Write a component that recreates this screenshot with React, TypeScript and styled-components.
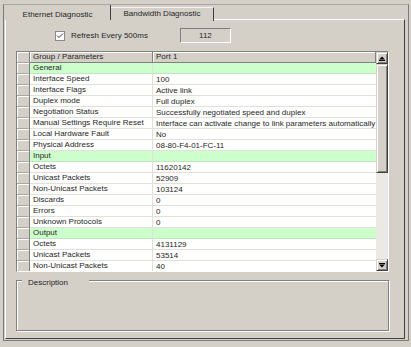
import { createGlobalStyle, styled } from "styled-components";

const Global = createGlobalStyle`
  html, body { margin: 0; padding: 0; background: #d4d0c8; }
  body { font-family: "Liberation Sans", Arial, sans-serif; font-size: 8px; color: #262626; }
  * { box-sizing: border-box; }
`;

type Row = { label: string; value?: string; group?: boolean };

const rows: Row[] = [
  { label: "General", group: true },
  { label: "Interface Speed", value: "100" },
  { label: "Interface Flags", value: "Active link" },
  { label: "Duplex mode", value: "Full duplex" },
  { label: "Negotiation Status", value: "Successfully negotiated speed and duplex" },
  { label: "Manual Settings Require Reset", value: "Interface can activate change to link parameters automatically" },
  { label: "Local Hardware Fault", value: "No" },
  { label: "Physical Address", value: "08-80-F4-01-FC-11" },
  { label: "Input", group: true },
  { label: "Octets", value: "11620142" },
  { label: "Unicast Packets", value: "52909" },
  { label: "Non-Unicast Packets", value: "103124" },
  { label: "Discards", value: "0" },
  { label: "Errors", value: "0" },
  { label: "Unknown Protocols", value: "0" },
  { label: "Output", group: true },
  { label: "Octets", value: "4131129" },
  { label: "Unicast Packets", value: "53514" },
  { label: "Non-Unicast Packets", value: "40" },
];

const Window = styled.div`
  width: 411px;
  height: 347px;
  padding: 4px 3px 6px 3px;
  display: flex;
  background: #d4d0c8;
`;

const Frame = styled.div`
  flex: 1;
  display: flex;
  flex-direction: column;
  border: 1px solid #7a7a7a;
  border-top-color: #a8a6a0;
  padding: 0 3px 1px 1px;
`;

const TabStrip = styled.div`
  height: 14px;
  display: flex;
  align-items: flex-start;
`;

const Tab = styled.div<{ $active?: boolean; $w: number }>`
  position: relative;
  z-index: ${(p) => (p.$active ? 1 : 0)};
  width: ${(p) => p.$w}px;
  height: ${(p) => (p.$active ? 15 : 14)}px;
  margin-top: ${(p) => (p.$active ? 0 : 2)}px;
  background: #d4d0c8;
  display: flex;
  justify-content: center;
  align-items: flex-end;
  line-height: 8px;
  padding-bottom: ${(p) => (p.$active ? 1 : 3)}px;
  border-right: 1px solid #404040;
  border-top: ${(p) => (p.$active ? "none" : "1px solid #f4f3f0")};
`;

const Panel = styled.div`
  flex: 1;
  display: flex;
  flex-direction: column;
  border-top: 1px solid #ffffff;
  border-left: 1px solid #ffffff;
  border-right: 1px solid #404040;
  border-bottom: 1px solid #404040;
  padding: 0 15px 7px 10px;
`;

const RefreshRow = styled.div`
  height: 31px;
  display: flex;
  align-items: center;
  padding-left: 39px;
`;

const CheckBox = styled.div`
  width: 10px;
  height: 10px;
  border: 1px solid #8a8a8a;
  background: #ffffff;
  display: flex;
  align-items: center;
  justify-content: center;
`;

const CheckLabel = styled.span`
  margin-left: 6px;
  line-height: 10px;
`;

const ValueBox = styled.div`
  margin-left: 32px;
  width: 51px;
  height: 15px;
  border: 1px solid #808080;
  border-right-color: #ffffff;
  border-bottom-color: #ffffff;
  display: flex;
  align-items: center;
  justify-content: center;
  line-height: 10px;
`;

const Grid = styled.div`
  height: 221px;
  display: flex;
  border: 1px solid #808080;
  border-right-color: #ffffff;
  border-bottom-color: #ffffff;
`;

const Table = styled.div`
  width: 359px;
  display: flex;
  flex-direction: column;
  overflow: hidden;
`;

const TableRow = styled.div`
  height: 11px;
  display: grid;
  grid-template-columns: 13px 123px 1fr;
`;

const RowHead = styled.div`
  background: #d4d0c8;
  border-right: 1px solid #808080;
  border-bottom: 1px solid #a9a69f;
  box-shadow: inset 1px 1px 0 #ffffff;
`;

const HeadCell = styled.div`
  background: #d4d0c8;
  border-right: 1px solid #808080;
  border-bottom: 1px solid #808080;
  box-shadow: inset 1px 1px 0 #ffffff;
  padding-left: 3px;
  line-height: 10px;
  white-space: nowrap;
`;

const Cell = styled.div<{ $group?: boolean; $value?: boolean }>`
  background: ${(p) => (p.$group ? "#ccffcc" : "#ffffff")};
  border-bottom: 1px solid ${(p) => (p.$group ? "#bfe8bf" : "#e3e0da")};
  border-right: ${(p) => (p.$value ? "none" : "1px solid #e3e0da")};
  padding-left: 3px;
  padding-top: ${(p) => (p.$value ? 1 : 0)}px;
  line-height: 10px;
  white-space: nowrap;
  overflow: hidden;
`;

const ScrollBar = styled.div`
  width: 12px;
  display: flex;
  flex-direction: column;
  background: #ebe9e4;
`;

const Raised = styled.div<{ $h: number }>`
  height: ${(p) => p.$h}px;
  flex: none;
  background: #d4d0c8;
  border: 1px solid #d4d0c8;
  border-right-color: #404040;
  border-bottom-color: #404040;
  box-shadow: inset 1px 1px 0 #ffffff, inset -1px -1px 0 #808080;
  display: flex;
  align-items: center;
  justify-content: center;
`;

const Track = styled.div`
  flex: 1;
`;

const GroupBox = styled.div`
  position: relative;
  margin-top: 8px;
  height: 51px;
  border: 1px solid #808080;
  box-shadow: inset 1px 1px 0 #ffffff, 1px 1px 0 #ffffff;
`;

const Legend = styled.span`
  position: absolute;
  top: -3px;
  left: 5px;
  padding: 0 21px 0 6px;
  background: #d4d0c8;
  line-height: 10px;
`;

const Arrow = ({ up }: { up?: boolean }) => (
  <svg width="10" height="10" viewBox="0 0 10 10">
    {up ? (
      <>
        <polygon points="2,6.5 5,3.5 8,6.5" fill="#000" />
        <rect x="2" y="7" width="6" height="1" fill="#000" />
      </>
    ) : (
      <>
        <rect x="2" y="3" width="6" height="1" fill="#000" />
        <polygon points="2,4.5 8,4.5 5,7.5" fill="#000" />
      </>
    )}
  </svg>
);

export default function App() {
  return (
    <>
      <Global />
      <Window>
        <Frame>
          <TabStrip>
            <Tab $active $w={106}>Ethernet Diagnostic</Tab>
            <Tab $w={103}>Bandwidth Diagnostic</Tab>
          </TabStrip>
          <Panel>
            <RefreshRow>
              <CheckBox>
                <svg width="8" height="8" viewBox="0 0 8 8">
                  <path d="M1 3.5 L3 5.5 L7 1.5" stroke="#333" strokeWidth="1" fill="none" />
                </svg>
              </CheckBox>
              <CheckLabel>Refresh Every 500ms</CheckLabel>
              <ValueBox>112</ValueBox>
            </RefreshRow>
            <Grid>
              <Table>
                <TableRow>
                  <RowHead />
                  <HeadCell>Group / Parameters</HeadCell>
                  <HeadCell>Port 1</HeadCell>
                </TableRow>
                {rows.map((r, i) => (
                  <TableRow key={i}>
                    <RowHead />
                    <Cell $group={r.group}>{r.label}</Cell>
                    <Cell $group={r.group} $value>
                      {r.value}
                    </Cell>
                  </TableRow>
                ))}
              </Table>
              <ScrollBar>
                <Raised $h={12}>
                  <Arrow up />
                </Raised>
                <Raised $h={109} />
                <Track />
                <Raised $h={12}>
                  <Arrow />
                </Raised>
              </ScrollBar>
            </Grid>
            <GroupBox>
              <Legend>Description</Legend>
            </GroupBox>
          </Panel>
        </Frame>
      </Window>
    </>
  );
}
